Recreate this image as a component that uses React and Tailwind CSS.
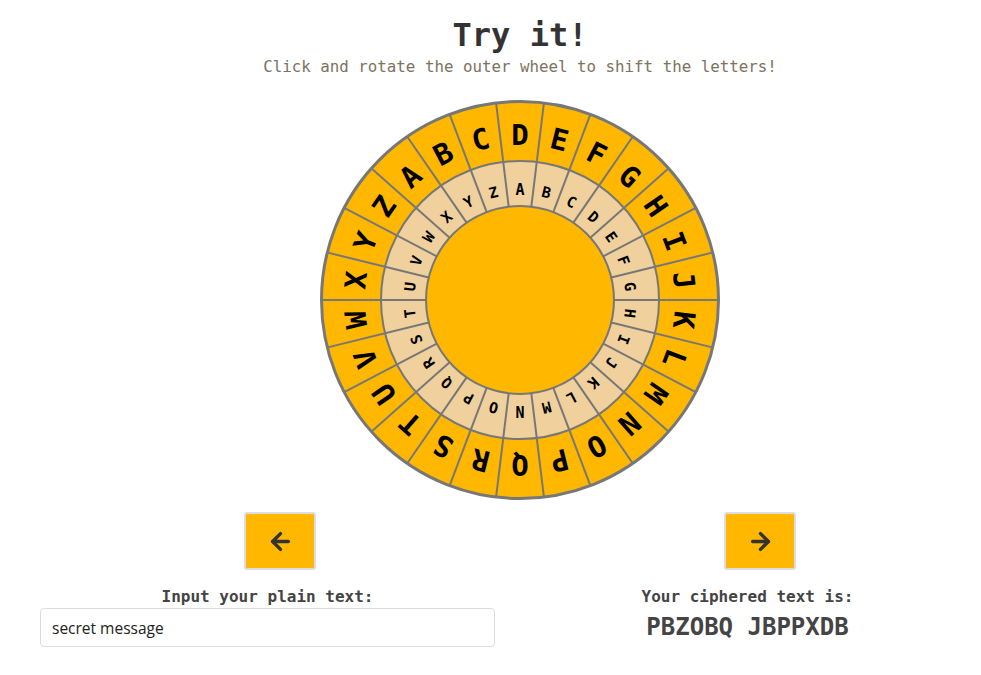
import React, { useState } from 'react';
import { ArrowLeft, ArrowRight } from 'lucide-react';

const ALPHA = 'ABCDEFGHIJKLMNOPQRSTUVWXYZ'.split('');
const STEP = 360 / 26;
const CX = 200;
const CY = 200;

const mono = { fontFamily: '"DejaVu Sans Mono", monospace' };

const caesar = (text, shift) =>
  text
    .toUpperCase()
    .split('')
    .map((ch) => {
      const i = ALPHA.indexOf(ch);
      if (i < 0) return ch;
      return ALPHA[(i - shift + 26) % 26];
    })
    .join('');

const Wheel = ({ shift }) => {
  const dividers = ALPHA.map((_, k) => {
    const a = ((k + 0.5) * STEP * Math.PI) / 180;
    return {
      x1: CX + 94 * Math.sin(a),
      y1: CY - 94 * Math.cos(a),
      x2: CX + 199 * Math.sin(a),
      y2: CY - 199 * Math.cos(a),
    };
  });

  return (
    <svg width="400" height="400" viewBox="0 0 400 400">
      <circle cx={CX} cy={CY} r="198.5" fill="#ffb700" stroke="#777" strokeWidth="3" />
      <circle cx={CX} cy={CY} r="139" fill="#f0d19e" stroke="#777" strokeWidth="2" />
      <circle cx={CX} cy={CY} r="94" fill="#ffb700" stroke="#777" strokeWidth="2" />
      {dividers.map((d, k) => (
        <line key={k} {...d} stroke="#777" strokeWidth="2" />
      ))}
      {ALPHA.map((ch, i) => (
        <text
          key={'o' + ch}
          x={CX}
          y={CY - 155}
          textAnchor="middle"
          fontSize="29"
          fontWeight="700"
          fill="#000"
          style={mono}
          transform={`rotate(${(i - shift) * STEP} ${CX} ${CY})`}
        >
          {ch}
        </text>
      ))}
      {ALPHA.map((ch, i) => (
        <text
          key={'i' + ch}
          x={CX}
          y={CY - 105.5}
          textAnchor="middle"
          fontSize="15"
          fontWeight="700"
          fill="#000"
          style={mono}
          transform={`rotate(${i * STEP} ${CX} ${CY})`}
        >
          {ch}
        </text>
      ))}
    </svg>
  );
};

const ArrowButton = ({ children, onClick }) => (
  <button
    onClick={onClick}
    className="w-[72px] h-[58px] bg-[#ffb700] border-2 border-[#dddddd] rounded-[3px] flex items-center justify-center text-[#333]"
  >
    {children}
  </button>
);

export default function App() {
  const [shift, setShift] = useState(3);
  const [plain, setPlain] = useState('secret message');

  return (
    <div className="w-[981px] h-[675px] overflow-hidden bg-white">
      <div className="ml-[40px] w-[960px] flex flex-col">
        <h1
          className="pt-[15px] h-[55px] leading-[40px] text-[32px] font-bold text-[#333] text-center"
          style={mono}
        >
          Try it!
        </h1>
        <p
          className="mt-[2px] leading-[20px] text-[15.8px] text-[#7d7160] text-center"
          style={mono}
        >
          Click and rotate the outer wheel to shift the letters!
        </p>

        <div className="mt-[23px] flex justify-center">
          <Wheel shift={shift} />
        </div>

        <div className="mt-[12px] grid grid-cols-2">
          <div className="flex justify-center">
            <ArrowButton onClick={() => setShift((s) => (s + 25) % 26)}>
              <ArrowLeft size={27} strokeWidth={3} />
            </ArrowButton>
          </div>
          <div className="flex justify-center">
            <ArrowButton onClick={() => setShift((s) => (s + 1) % 26)}>
              <ArrowRight size={27} strokeWidth={3} />
            </ArrowButton>
          </div>
        </div>

        <div className="mt-[17px] flex">
          <div className="w-[455px] flex flex-col">
            <label
              className="leading-[20px] text-[16px] font-bold text-[#444] text-center"
              style={mono}
            >
              Input your plain text:
            </label>
            <input
              value={plain}
              onChange={(e) => setPlain(e.target.value)}
              className="mt-[1px] h-[39px] w-full border border-[#dcdcdc] rounded-[4px] pl-[11px] text-[15.5px] text-[#222] outline-none"
              style={{ fontFamily: '"Open Sans", "Noto Sans", sans-serif' }}
            />
          </div>
          <div className="ml-[20px] w-[465px] flex flex-col items-center">
            <div
              className="leading-[20px] text-[16px] font-bold text-[#444]"
              style={mono}
            >
              Your ciphered text is:
            </div>
            <div
              className="mt-[4px] leading-[32px] text-[24px] font-bold text-[#444]"
              style={mono}
            >
              {caesar(plain, shift)}
            </div>
          </div>
        </div>
      </div>
    </div>
  );
}
